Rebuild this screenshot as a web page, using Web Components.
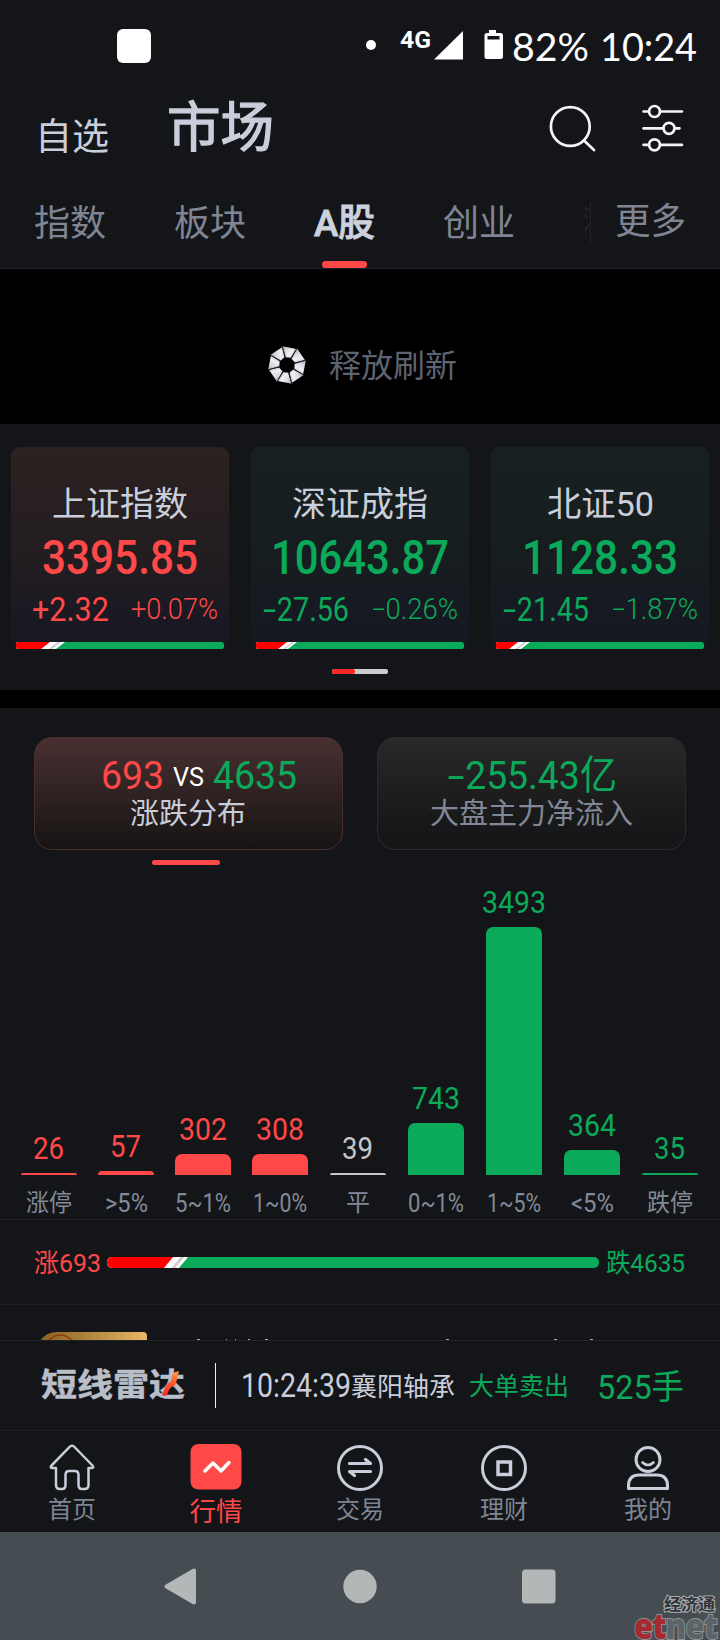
<!DOCTYPE html>
<html lang="zh-CN">
<head>
<meta charset="utf-8">
<title>市场</title>
<style>
body{margin:0;background:#141519;width:720px;height:1640px;overflow:hidden;font-family:Roboto,"Noto Sans CJK SC",sans-serif;color:#cacedb}
</style>
</head>
<body>
<market-app></market-app>
<script>
const define=(name,html,setup)=>customElements.define(name,class extends HTMLElement{
  constructor(){super();this.attachShadow({mode:'open'})}
  connectedCallback(){
    if(this.done)return;this.done=true;
    const t=document.createElement('template');
    t.innerHTML=typeof html==='function'?html(this):html;
    this.shadowRoot.append(t.content.cloneNode(true));
    if(setup)setup(this);
  }
});

/* One line of text, condensed or widened to the width w, on a line of height h. */
define('fit-text',el=>{
  const h=+el.getAttribute('h'),fs=el.getAttribute('fs')||h/.711;
  return `<style>:host{display:block;flex:none;width:${el.getAttribute('w')}px;height:${h}px}
  span{display:inline-block;white-space:nowrap;font-size:${fs}px;line-height:${h+2}px;transform-origin:0 50%;vertical-align:top}
  ::slotted(i){display:inline-block;font-style:normal;transform:scaleX(1.65);margin:0 .12em}</style><span><slot></slot></span>`},
 el=>{const s=el.shadowRoot.querySelector('span');
  s.style.transform=`scaleX(${+el.getAttribute('w')/s.getBoundingClientRect().width})`});

define('status-bar',`<style>:host{display:flex;height:90px;color:#fff;font-family:Lato,sans-serif}
 .app{width:34px;height:34px;border-radius:6px;background:#fff;margin:29px 0 0 117px}
 .dot{width:10px;height:10px;border-radius:5px;background:#fff;margin:40px 0 0 215px}
 .net{margin:31px 0 0 24px;font-family:Roboto,sans-serif;font-weight:700}
 svg{margin:29px 0 0 3px;flex:none}</style>
 <div class="app"></div><div class="dot"></div><fit-text class="net" w="31" h="17" fs="23">4G</fit-text>
 <svg width="70" height="32" viewBox="0 0 70 32" fill="#fff"><path d="M0 30.5L29 2V30.5Z"/><path fill-rule="evenodd" d="M55 1h7v3h4.500q2.5 0 2.5 2.5v21q0 2.500-2.500 2.500H53q-2.500 0-2.500-2.500v-21q0-2.500 2.500-2.500h2ZM53.500 7v3.500h12V7Z"/></svg>
 <fit-text w="77" h="27" fs="38" style="margin:32px 0 0 8px">82%</fit-text>
 <fit-text w="97" h="27" fs="38" style="margin:32px 0 0 11px">10:24</fit-text>`);

define('title-bar',`<style>:host{display:flex;height:84px}svg{flex:none;margin-top:10px}</style>
 <fit-text w="74" h="38" fs="37" style="margin:28px 0 0 35px">自选</fit-text>
 <fit-text w="107" h="52" fs="54" style="margin:12px 0 0 58px;-webkit-text-stroke:1.300px #cacedb">市场</fit-text>
 <svg style="margin-left:272px" width="146" height="60" viewBox="546 100 146 60" fill="none" stroke="#f4f4f6" stroke-width="2.700" stroke-linecap="round"><circle cx="570.300" cy="126.500" r="19.400"/><path d="M584 140.500L594 150M643.500 111.500h5.500M660 111.500h22M643.500 128.300h20M674.500 128.300h5M643.500 144.800h5.500M660 144.800h22"/><circle cx="654.500" cy="111.500" r="5.500"/><circle cx="669" cy="128.300" r="5.500"/><circle cx="654.500" cy="144.800" r="5.500"/></svg>`);

define('market-tabs',`<style>:host{display:flex;height:94px;border-bottom:1px solid #1d1e2a;color:#7f8593}
 fit-text{margin-top:31px}
 .on{margin:31px 0 0 68px;color:#cdd1dc;font-weight:500;width:62px}
 .on fit-text{margin:0;-webkit-text-stroke:.900px #cdd1dc}
 .on b{display:block;width:45px;height:7px;border-radius:3.500px;background:#ff4848;margin:20px 0 0 8px}
 .next{margin:30px 0 0 69px}
 .sep{width:1px;height:41px;background:#22232b;margin:28px 0 0 1px}</style>
 <fit-text w="72" h="36" fs="36" style="margin-left:34px">指数</fit-text>
 <fit-text w="72" h="36" fs="36" style="margin-left:68px">板块</fit-text>
 <div class="on"><fit-text w="61" h="36" fs="37">A股</fit-text><b></b></div>
 <fit-text w="72" h="36" fs="36" style="margin-left:67px">创业</fit-text>
 <svg class="next" width="5" height="36" stroke="#24262b" stroke-width="2" fill="none"><path d="M1 4L5 6M0 11L4 13M1 27L5 20"/></svg><div class="sep"></div>
 <fit-text w="71" h="36" fs="36" style="margin:29px 0 0 24px">更多</fit-text>`);

define('pull-refresh',el=>{
  let p='';
  for(let i=0;i<8;i++)p+=`<path transform="rotate(${i*45+8} 20 20)" fill="url(#f)" d="M12.700 2L26.800 2.800L22.700 12.200L17.400 12.600Z"/>`;
  return `<style>:host{display:flex;height:155px;background:#000;color:#5d6371}</style>
  <svg width="40" height="40" viewBox="0 0 40 40" style="margin:76px 0 0 267px"><defs><linearGradient id="f" x1="0" y1="0" x2="1" y2=".3"><stop offset="0" stop-color="#a0a5af"/><stop offset=".35" stop-color="#d5d8de"/><stop offset=".75" stop-color="#f0f1f5"/><stop offset="1" stop-color="#bfc3cb"/></linearGradient></defs>${p}<g stroke="#222" stroke-width=".9">${[0,1,2,3,4,5,6,7].map(i=>`<path transform="rotate(${i*45+8} 20 20)" d="M12.700 2L17.400 12.600"/>`).join('')}</g></svg>
  <fit-text w="128" h="32" fs="32" style="margin:80px 0 0 22px">释放刷新</fit-text>`});

/* Advance/decline bar: top = right end of red on the top edge, gap = width of the white slash. */
define('split-bar',el=>{
  const g=n=>+el.getAttribute(n),w=g('w'),h=g('h'),a=g('top'),s=g('gap'),k=g('skew'),r=g('r');
  return `<style>:host{display:block;flex:none;width:${w}px;height:${h}px;border-radius:${r}px;overflow:hidden}svg{display:block}</style>
  <svg width="${w}" height="${h}"><path fill="#0aaa5a" d="M0 0H${w}V${h}H0Z"/><path fill="#fff" d="M0 0H${a+s}L${a+s-k} ${h}H0Z"/><path fill="#cfcfcf" d="M${a+s*.5} 0H${a+s*.75}L${a+s*.75-k} ${h}H${a+s*.5-k}Z"/><path fill="#f00" d="M0 0H${a}L${a-k} ${h}H0Z"/></svg>`});

define('index-card',el=>{
  const a=n=>el.getAttribute(n),up=el.hasAttribute('up'),sg=s=>s.replace('-','<i>-</i>');
  return `<style>:host{display:flex;flex-direction:column;box-sizing:border-box;width:218px;height:202px;border-radius:9px;align-items:center;padding-top:39px;
   background:linear-gradient(${up?'#2b2120,#231d20 55%,#1a1923 85%,#171822':'#182020,#161c1f 65%,#161a22 75%,#151821'});color:${up?'#ff4848':'#0aaa5a'}}
   .t{color:#cacedb}.row{display:flex;width:100%}split-bar{margin-top:21px}</style>
   <fit-text class="t" w="${a('tw')}" h="34" fs="34">${a('name')}</fit-text>
   <fit-text w="${a('vw')}" h="34" fs="49" style="margin-top:20px;font-weight:500">${a('value')}</fit-text>
   <div class="row" style="margin-top:24px"><fit-text w="${a('dw')}" h="23" style="margin-left:${119-7-a('dw')-14}px">${sg(a('diff'))}</fit-text>
   <fit-text w="87" h="21" style="margin-left:22px;font-weight:300">${sg(a('pct'))}</fit-text></div>
   <split-bar w="208" h="7" r="2.500" top="${a('top')}" gap="${a('gap')}" skew="9"></split-bar>`});

define('index-panel',`<style>:host{display:block;height:266px;border-bottom:18px solid #000}
 .c{display:flex;gap:22px;padding:23px 11px 0}
 .p{width:56px;height:5px;border-radius:2px;background:#ccc;margin:20px auto 0;overflow:hidden}.p b{display:block;width:23px;height:5px;border-radius:2px;background:#fb2626}</style>
 <div class="c"><index-card up name="上证指数" tw="136" value="3395.85" vw="156" diff="+2.32" dw="77" pct="+0.07%" top="34" gap="15"></index-card>
 <index-card name="深证成指" tw="136" value="10643.87" vw="178" diff="-27.56" dw="87" pct="-0.26%" top="31" gap="10"></index-card>
 <index-card name="北证50" tw="107" value="1128.33" vw="156" diff="-21.45" dw="87" pct="-1.87%" top="22" gap="12"></index-card></div>
 <div class="p"><b></b></div>`);

define('summary-pills',`<style>:host{display:flex;padding:29px 34px 0;gap:34px;height:114px}
 .p{box-sizing:border-box;width:309px;height:113px;border-radius:18px;border:1px solid #2a2b2d;background:linear-gradient(#292929,#1b1b1c 60%,#141517);display:flex;flex-direction:column;align-items:center;color:#818795}
 .a{border-color:#4a2e2f;background:linear-gradient(#493031,#161413);color:#c8ccd8}
 .r{display:flex;align-items:center;margin:23px 0 10px;height:28px}.red{color:#ff4848}.g{color:#0aaa5a}
 .a .r{align-self:flex-start;margin-left:66px}</style>
 <div class="p a"><div class="r"><fit-text class="red" w="63" h="28">693</fit-text><fit-text w="31" h="18" style="margin:4px 0 0 9px;color:#fff">VS</fit-text><fit-text class="g" w="84" h="28" style="margin-left:9px">4635</fit-text></div>
 <fit-text w="116" h="29" fs="29" style="margin-right:2px">涨跌分布</fit-text></div>
 <div class="p"><div class="r g"><fit-text w="171" h="28"><i>-</i>255.43亿</fit-text></div><fit-text w="203" h="29" fs="29" style="margin-right:1px">大盘主力净流入</fit-text></div>`);

define('rise-fall-chart',el=>{
  const d=[['26','涨停',2,21,'#ff4848',46],['57','>5%',4,98,'#ff4848',43],['302','5~1%',21,175,'#ff4848',56],['308','1~0%',21,252,'#ff4848',54],['39','平',2,330,'#c4c5c9',24],['743','0~1%',52,408,'#0aaa5a',56],['3493','1~5%',248,486,'#0aaa5a',54],['364','<5%',25,564,'#0aaa5a',43],['35','跌停',2,642,'#0aaa5a',46]];
  return `<style>:host{display:block;height:359px;border-bottom:1px solid #20212a}
  .u{width:68px;height:5px;border-radius:2.500px;background:#ff4848;margin-left:152px}
  .u+div{display:flex;height:310px}.col{width:56px;display:flex;flex-direction:column;align-items:center;justify-content:flex-end}
  .col>b{display:block;width:56px;margin-top:14px}.col fit-text{margin-right:1px}.x{color:#838a97;margin:0;height:0;display:flex;padding-top:18px}
  .c{width:56px;height:0;display:flex;justify-content:center;overflow:visible}</style>
  <div class="u"></div><div>${d.map((e,i)=>`<div class="col" style="margin-left:${i?e[3]-d[i-1][3]-56:21}px"><fit-text w="${[0,0,31,48,64][e[0].length]}" h="22" style="color:${e[4]}">${e[0]}</fit-text><b style="height:${e[2]}px;background:${e[4]};border-radius:${Math.min(e[2],7)}px ${Math.min(e[2],7)}px 0 0"></b></div>`).join('')}</div>
  <div class="x">${d.map((e,i)=>`<div class="c" style="margin-left:${i?e[3]-d[i-1][3]-56:21}px"><fit-text w="${e[5]}" h="19" fs="${/[%]/.test(e[1])?26:23.500}">${e[1].replace('<','&lt;')}</fit-text></div>`).join('')}</div>`});

define('ratio-row',`<style>:host{display:flex;align-items:center;height:84px;border-bottom:1px solid #20212a}</style>
 <fit-text w="67" h="20" fs="26.500" style="margin-left:34px;color:#ff4848">涨693</fit-text>
 <split-bar w="492" h="11" r="5" top="66" gap="15" skew="9" style="margin-left:6px"></split-bar>
 <fit-text w="79" h="20" fs="26.500" style="margin-left:7px;color:#0aaa5a">跌4635</fit-text>`);

define('banner-peek',`<style>:host{display:block;height:35px;border-bottom:1px solid #20212a}svg{display:block}</style>
 <svg width="720" height="35" viewBox="0 1305 720 35"><defs><linearGradient id="g"><stop stop-color="#8a6422"/><stop offset=".35" stop-color="#a57e36"/><stop offset="1" stop-color="#e9b766"/></linearGradient></defs>
 <path fill="url(#g)" d="M41 1340Q46 1332 58 1332H143Q147 1332 147 1336V1340Z"/><path fill="none" stroke="#8f3e08" stroke-width="1.600" d="M48 1341Q60 1329 73 1341"/>
 <path stroke="#aaa" stroke-width="1" d="M197 1339.500h3M226 1339.500h1M235 1339.500h1M248 1339.500h2M265 1339.500h3M446 1339.500h3M554 1339.500h3M590 1339.500h3"/></svg>`);

define('radar-ticker',`<style>:host{display:flex;align-items:center;height:89px;border-bottom:1px solid #20212a}
 .logo{position:relative;margin-left:41px;color:#b9bfc9;font-weight:700;transform:scaleY(.88)}
 .logo fit-text{-webkit-text-stroke:.500px #b9bfc9}
 .logo svg{position:absolute;left:119px;top:0}
 .s{width:1px;height:45px;background:#eee;margin:0 0 0 30px}.g{color:#0aaa5a}</style>
 <div class="logo"><fit-text w="144" h="35" fs="36">短线雷达</fit-text><svg width="22" height="32" viewBox="0 0 22 32"><defs><linearGradient id="o" x2="0" y2="1"><stop stop-color="#ff9a3c"/><stop offset=".5" stop-color="#ff5a2c"/><stop offset="1" stop-color="#ff1f22"/></linearGradient></defs><path fill="url(#o)" d="M13 3L19 1L16 15L14 19H10L7 29H2L6 17L11 12Z"/></svg></div>
 <div class="s"></div>
 <fit-text w="110" h="23" style="margin-left:25px">10:24:39</fit-text>
 <fit-text w="104" h="26" fs="26">襄阳轴承</fit-text>
 <fit-text class="g" w="100" h="26" fs="25" style="margin-left:14px">大单卖出</fit-text>
 <fit-text class="g" w="87" h="24" fs="34" style="margin-left:28px">525手</fit-text>`);

define('nav-item',`<style>:host{display:flex;flex-direction:column;align-items:center;width:144px;color:#7f8593;padding-top:12px}
 :host([on]){color:#ff4848}svg{display:block;overflow:visible}fit-text{margin-top:6px}:host([on]) fit-text{margin-top:8px}</style>
 <svg width="52" height="48" viewBox="0 0 52 48" fill="none" stroke="#cacedb" stroke-width="3" stroke-linejoin="round" stroke-linecap="round"></svg>`,
 el=>{const s={home:'<path stroke-width="2.500" d="M26 2.500L28 3.500L46 22Q49 25 45 25H42.500V42Q42.500 46 38.500 46H36Q32.500 46 32.500 42V32Q32.500 28 29 28H23Q19.500 28 19.500 32V42Q19.500 46 16 46H14Q10 46 10 42V25H7Q3 25 6 22L24 3.500Z"/>',
  quote:'<rect x=".500" y="1" width="51" height="45.500" rx="8" fill="#ff4848" stroke="none"/><path stroke="#fff" stroke-width="3.500" d="M15 28L23 20L31 28L39 19.500"/>',
  trade:'<circle cx="26" cy="25" r="21.500"/><path stroke-width="3.200" d="M15.500 20.500H36.500L31.500 16.500M36.500 28.500H15.500L20.500 32.500"/>',
  money:'<circle cx="26" cy="25" r="21.500"/><rect stroke-linejoin="miter" stroke-width="3.500" x="20" y="19" width="12.500" height="12.500"/>',
  me:'<circle cx="26" cy="16.500" r="12" /><path stroke-width="2.600" d="M20.500 19.500Q26 24.500 31.500 19.500"/><path d="M6.500 45.500V43Q6.500 32 17 32H35Q45.500 32 45.500 43V45.500Z"/>'};
  el.shadowRoot.querySelector('svg').innerHTML=s[el.getAttribute('icon')];
  const on=el.hasAttribute('on');
  el.shadowRoot.append(Object.assign(document.createElement('template'),{innerHTML:`<fit-text w="${on?53:48}" h="24" fs="${on?26.5:24}">${el.getAttribute('label')}</fit-text>`}).content)});

define('bottom-nav',`<style>:host{display:flex;height:101px}</style>
 <nav-item icon="home" label="首页"></nav-item><nav-item icon="quote" label="行情" on></nav-item><nav-item icon="trade" label="交易"></nav-item><nav-item icon="money" label="理财"></nav-item><nav-item icon="me" label="我的"></nav-item>`);

define('system-bar',`<style>:host{display:block;position:relative;height:108px;background:#454c52}
 svg{display:block}.w{position:absolute;left:634px;top:62px;width:84px}
 .cn{margin-left:30px;color:#2e3439;font-weight:700;-webkit-text-stroke:2px #a9adaf;paint-order:stroke fill}
 .en{font-family:"Open Sans",sans-serif;font-weight:800;color:#5c6468;-webkit-text-stroke:2px #8d9294;paint-order:stroke fill;letter-spacing:-1px;margin-top:-1px}
 .en b{color:#a5292f}</style>
 <svg width="720" height="108" viewBox="0 1532 720 108" fill="#b3b7b8"><path stroke="#b3b7b8" stroke-width="4" stroke-linejoin="round" d="M166.500 1586.500L194 1570.500V1602.500Z"/><circle cx="360" cy="1586.500" r="16.700"/><rect x="522" y="1569.500" width="33.500" height="34" rx="3.500"/></svg>
 <div class="w"><fit-text class="cn" w="51" h="20" fs="16">经济通</fit-text><fit-text class="en" w="83" h="24" fs="36"><b>et</b>net</fit-text></div>`);

define('market-app',`<style>:host{display:block;width:720px;height:1640px}</style>
 <status-bar></status-bar><title-bar></title-bar><market-tabs></market-tabs><pull-refresh></pull-refresh><index-panel></index-panel>
 <summary-pills></summary-pills><rise-fall-chart style="margin-top:9px"></rise-fall-chart><ratio-row></ratio-row><banner-peek></banner-peek><radar-ticker></radar-ticker><bottom-nav></bottom-nav><system-bar></system-bar>`);
</script>
</body>
</html>
